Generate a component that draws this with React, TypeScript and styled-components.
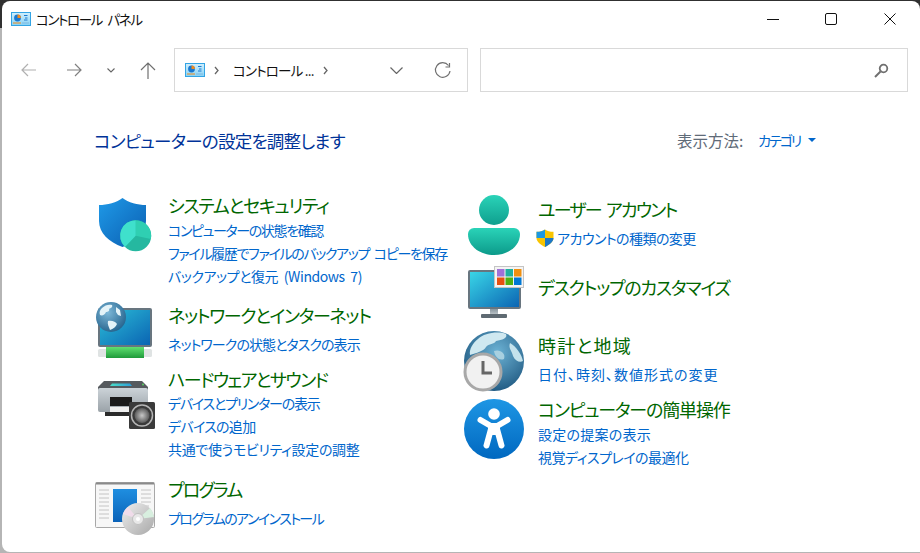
import React from "react";
import styled, { createGlobalStyle } from "styled-components";

const Global = createGlobalStyle`
  html, body { margin: 0; padding: 0; background: #b5b5b5; }
  body { font-family: "Noto Sans CJK JP", "Noto Sans", sans-serif; font-feature-settings: "palt"; }
  * { box-sizing: border-box; }
`;

const Desktop = styled.div`
  width: 920px;
  height: 553px;
  padding: 1px 0 1px 2px;
  background: linear-gradient(#303030 0 28px, #b5b5b5 28px);
  overflow: hidden;
`;
const Window = styled.div`
  width: 918px;
  height: 551px;
  background: #fff;
  border-radius: 8px 8px 0 8px;
  overflow: hidden;
  display: flex;
  flex-direction: column;
`;
const TitleBar = styled.div`
  height: 36px;
  display: flex;
  align-items: center;
  padding: 0 1px 0 9px;
  flex: none;
`;
const TitleText = styled.span`
  margin-left: 5px;
  font-size: 13.5px;
  letter-spacing: -1.4px;
  word-spacing: 4px;
  color: #111;
  flex: 1;
`;
const WinButton = styled.button`
  width: 58.5px;
  height: 36px;
  padding: 0;
  border: 0;
  background: none;
  display: flex;
  align-items: center;
  justify-content: center;
`;
const ToolBar = styled.div`
  height: 44px;
  margin-top: 11px;
  display: flex;
  align-items: center;
  flex: none;
`;
const NavButton = styled.button<{ $w: number }>`
  width: ${(p) => p.$w}px;
  height: 44px;
  padding: 0;
  border: 0;
  background: none;
  display: flex;
  align-items: center;
  justify-content: center;
`;
const AddressBox = styled.div`
  width: 294px;
  height: 44px;
  margin-left: 7px;
  border: 1px solid #d9d9d9;
  display: flex;
  align-items: center;
  padding-left: 10px;
`;
const Spacer = styled.span<{ $w: number }>`
  flex: none;
  width: ${(p) => p.$w}px;
`;
const Crumb = styled.span`
  margin-left: 14px;
  width: 90px;
  font-size: 13.5px;
  letter-spacing: -0.8px;
  color: #111;
  white-space: nowrap;
`;
const SearchBox = styled.div`
  width: 428px;
  height: 44px;
  margin-left: 12px;
  border: 1px solid #d9d9d9;
  display: flex;
  align-items: center;
  justify-content: flex-end;
  padding-right: 18px;
`;
const Content = styled.main`
  flex: 1;
  padding: 0 0 0 92px;
`;
const HeadRow = styled.div`
  height: 28px;
  margin-top: 34px;
  display: flex;
  align-items: center;
`;
const Heading = styled.h1`
  margin: 0;
  flex: none;
  width: 583px;
  font-size: 17.5px;
  font-weight: 400;
  letter-spacing: -0.75px;
  color: #003399;
`;
const ViewLabel = styled.span`
  font-size: 15.5px;
  color: #5f6b78;
  width: 81px;
`;
const ViewValue = styled.span`
  font-size: 14px;
  letter-spacing: -2px;
  color: #0066cc;
  display: flex;
  align-items: center;
  gap: 8px;
`;
const Caret = styled.i`
  width: 0;
  height: 0;
  border-left: 4px solid transparent;
  border-right: 4px solid transparent;
  border-top: 4px solid #0066cc;
`;
const Columns = styled.div`
  margin-top: 39px;
  display: grid;
  grid-template-columns: 370px 1fr;
`;
const Column = styled.div<{ $top: number }>`
  padding-top: ${(p) => p.$top}px;
`;
const Category = styled.section<{ $h: number }>`
  height: ${(p) => p.$h}px;
  display: flex;
`;
const IconSlot = styled.div<{ $top: number }>`
  width: 74px;
  height: 0;
  flex: none;
  svg { display: block; overflow: visible; margin-top: ${(p) => p.$top}px; }
`;
const CatTitle = styled.h2<{ $ls: number; $gap: number }>`
  margin: 0 0 ${(p) => p.$gap}px;
  height: 24px;
  line-height: 24px;
  font-size: 18px;
  font-weight: 400;
  letter-spacing: ${(p) => p.$ls}px;
  word-spacing: 3px;
  color: #006600;
  white-space: nowrap;
`;
const CatLink = styled.a<{ $ls: number }>`
  display: flex;
  align-items: center;
  height: 23px;
  font-size: 14px;
  letter-spacing: ${(p) => p.$ls}px;
  word-spacing: 3px;
  color: #0066cc;
  white-space: pre;
`;
const Glyph = styled.svg`
  flex: none;
  display: block;
`;
const UacGlyph = styled.svg`
  flex: none;
  margin: 0 3px 0 -2px;
`;

const PanelIcon: React.FC = () => (
  <Glyph width="20" height="14" viewBox="0 0 20 14">
    <defs>
      <linearGradient id="pg" x1="0" y1="0" x2="0" y2="1">
        <stop offset="0" stopColor="#d2effc" />
        <stop offset="1" stopColor="#86d2f5" />
      </linearGradient>
    </defs>
    <rect x="0.5" y="0.5" width="19" height="13" fill="url(#pg)" stroke="#33a4e4" />
    <circle cx="6.500" cy="6" r="3.400" fill="#1a78d0" />
    <path d="M6.500 6V2.600A3.400 3.400 0 0 1 9.900 6Z" fill="#f08a1d" />
    <path d="M13 3.500h3.500M14 6h2.500M13 8h3.500" stroke="#1a78d0" strokeWidth="1" />
    <path d="M2 11h8" stroke="#f08a1d" strokeWidth="1.200" />
    <path d="M11 11h7" stroke="#7fb8e0" strokeWidth="1" />
  </Glyph>
);
const Chevron: React.FC = () => (
  <Glyph width="5" height="9" viewBox="0 0 5 9">
    <path d="M1 1l3 3.500L1 8" fill="none" stroke="#666" strokeWidth="1.300" />
  </Glyph>
);

const ShieldIcon = () => (
  <svg width="62" height="62" viewBox="0 0 62 62">
    <defs>
      <linearGradient id="sh" x1="0" y1="0" x2="1" y2="1">
        <stop offset="0" stopColor="#1f9ae8" />
        <stop offset="1" stopColor="#0a5db0" />
      </linearGradient>
    </defs>
    <path d="M28.500 5C34 9.500 44 12 52 12V28C52 40 42 49 28.500 54C15 49 5 40 5 28V12C13 12 23 9.500 28.500 5Z" fill="url(#sh)" />
    <circle cx="41.700" cy="42.700" r="15.500" fill="#25b8a0" />
    <path d="M41.700 42.700V27.200A15.500 15.500 0 0 1 56.800 46Z" fill="#2fcfb2" />
    <path d="M41.700 42.700V27.200A15.500 15.500 0 0 0 31 54Z" fill="#3fe0cc" />
  </svg>
);
const NetworkIcon = () => (
  <svg width="62" height="62" viewBox="0 0 62 62">
    <defs>
      <linearGradient id="nm" x1="0" y1="0" x2="1" y2="1">
        <stop offset="0" stopColor="#2cc0d8" />
        <stop offset="1" stopColor="#0a62b2" />
      </linearGradient>
      <linearGradient id="ng" x1="0" y1="0" x2="0" y2="1">
        <stop offset="0" stopColor="#5fe070" />
        <stop offset="1" stopColor="#1f9a3a" />
      </linearGradient>
      <radialGradient id="nb" cx="0.4" cy="0.35" r="0.7">
        <stop offset="0" stopColor="#7db8d8" />
        <stop offset="1" stopColor="#24628c" />
      </radialGradient>
    </defs>
    <rect x="5" y="6" width="52" height="37" rx="1" fill="url(#nm)" stroke="#68757f" strokeWidth="2" />
    <rect x="4" y="46" width="54" height="8" rx="1.500" fill="#dfe3e3" />
    <rect x="12" y="44" width="38" height="11" fill="url(#ng)" />
    <circle cx="17" cy="14" r="15" fill="url(#nb)" />
    <path d="M8 5c3-3 7-4 10-3 1 2-1 3-3 4 1 2-1 3-3 3-1 3-4 4-6 3-1-3 0-5 2-7zM14 18c4-1 8 1 9 3-1 3-4 5-7 6-1-3-3-6-2-9zM22 4l4 3 1 6-3-1-2-3z" fill="#e4f3f8" />
  </svg>
);
const PrinterIcon = () => (
  <svg width="62" height="62" viewBox="0 0 62 62">
    <defs>
      <linearGradient id="pb" x1="0" y1="0" x2="0" y2="1">
        <stop offset="0" stopColor="#ccd3d8" />
        <stop offset="1" stopColor="#9aa2a8" />
      </linearGradient>
      <linearGradient id="pt" x1="0" y1="0" x2="1" y2="0">
        <stop offset="0" stopColor="#4adfc8" />
        <stop offset="1" stopColor="#2c9cd8" />
      </linearGradient>
      <radialGradient id="ps" cx="0.5" cy="0.5" r="0.5">
        <stop offset="0" stopColor="#c8c8c8" />
        <stop offset="1" stopColor="#5a5a5a" />
      </radialGradient>
    </defs>
    <path d="M10 14H48L54 20V24H4V20Z" fill="#565a5e" />
    <path d="M18 16.500H36L38 19H16Z" fill="url(#pt)" />
    <rect x="4" y="21" width="50" height="24" rx="2" fill="url(#pb)" />
    <rect x="16" y="30" width="22" height="9" fill="#1b1b1b" />
    <rect x="16" y="40" width="22" height="5" fill="#efefef" />
    <rect x="11" y="45" width="25" height="4" fill="#2b2b2b" />
    <circle cx="49" cy="17.500" r="1" fill="#55d060" />
    <rect x="35" y="35" width="26" height="27" rx="1.500" fill="#3a3a3a" />
    <circle cx="48" cy="48.500" r="10.500" fill="#3a3a3a" stroke="#b5b5b5" strokeWidth="1.500" />
    <circle cx="48" cy="48.500" r="7.500" fill="url(#ps)" />
  </svg>
);
const ProgramIcon = () => (
  <svg width="62" height="62" viewBox="0 0 62 62">
    <defs>
      <linearGradient id="pr" x1="0" y1="0" x2="0" y2="1">
        <stop offset="0" stopColor="#1f8ee0" />
        <stop offset="1" stopColor="#0a62b8" />
      </linearGradient>
      <linearGradient id="pd" x1="0" y1="0" x2="1" y2="1">
        <stop offset="0" stopColor="#efefef" />
        <stop offset="1" stopColor="#a8a8a8" />
      </linearGradient>
    </defs>
    <rect x="1.500" y="5.500" width="59" height="45" rx="1" fill="#f7f7f7" stroke="#a8a8a8" />
    <path d="M2 6.500H60" stroke="#8a8a8a" strokeWidth="2" />
    <rect x="19" y="12" width="24" height="33" fill="url(#pr)" />
    <path d="M5 13h10M5 17h10M5 21h10M5 25h10M5 29h10M5 33h10M5 37h10M5 41h10M47 13h10M47 17h10M47 21h10M47 25h10M47 29h8" stroke="#c4c4c4" strokeWidth="1" />
    <circle cx="44" cy="42" r="16" fill="url(#pd)" />
    <path d="M44 42L56 31A16 16 0 0 1 60 40Z" fill="#d8efdf" />
    <path d="M44 42L29 37A16 16 0 0 1 34 30Z" fill="#f0dcea" />
    <circle cx="44" cy="42" r="5.500" fill="#e8e8e8" stroke="#c0c0c0" />
    <circle cx="44" cy="42" r="2" fill="#fff" />
  </svg>
);
const PersonIcon = () => (
  <svg width="62" height="62" viewBox="0 0 62 62">
    <defs>
      <linearGradient id="ph" x1="0" y1="0" x2="0" y2="1">
        <stop offset="0" stopColor="#2ad3b8" />
        <stop offset="1" stopColor="#0f9f8e" />
      </linearGradient>
      <linearGradient id="pc" x1="0" y1="0" x2="0" y2="1">
        <stop offset="0" stopColor="#2ad3b8" />
        <stop offset="1" stopColor="#0c9a8a" />
      </linearGradient>
    </defs>
    <circle cx="30" cy="15" r="15" fill="url(#ph)" />
    <path d="M10 33H50A6 6 0 0 1 56 39C56 52 43 60 30 60C17 60 4 52 4 39A6 6 0 0 1 10 33Z" fill="url(#pc)" />
  </svg>
);
const TILES = [
  ["#a070d8", "#20b0a0", "#f09010"],
  ["#e85010", "#50b010", "#0078d4"],
];
const DesktopIcon = () => (
  <svg width="62" height="62" viewBox="0 0 62 62">
    <defs>
      <linearGradient id="dm" x1="0" y1="0" x2="1" y2="1">
        <stop offset="0" stopColor="#3ad8e8" />
        <stop offset="1" stopColor="#0a62b2" />
      </linearGradient>
      <linearGradient id="ds" x1="0" y1="0" x2="0" y2="1">
        <stop offset="0" stopColor="#8a979f" />
        <stop offset="1" stopColor="#c0c8cc" />
      </linearGradient>
    </defs>
    <rect x="5" y="5" width="51" height="37" rx="1" fill="url(#dm)" stroke="#68757f" strokeWidth="2" />
    <rect x="26" y="43" width="8" height="6" fill="url(#ds)" />
    <rect x="17" y="48" width="26" height="4" rx="1" fill="#5f6a72" />
    <rect x="30.500" y="0.500" width="29" height="21" fill="#f4f4f4" stroke="#c4c4c4" />
    {TILES.map((row, r) =>
      row.map((c, i) => <rect key={c} x={33 + i * 8.5} y={3 + r * 8.5} width="7.500" height="7.500" fill={c} />)
    )}
  </svg>
);
const ClockIcon = () => (
  <svg width="62" height="62" viewBox="0 0 62 62">
    <defs>
      <radialGradient id="cg" cx="0.55" cy="0.35" r="0.75">
        <stop offset="0" stopColor="#6cb2d4" />
        <stop offset="1" stopColor="#174f78" />
      </radialGradient>
    </defs>
    <circle cx="30" cy="30" r="30" fill="url(#cg)" />
    <path d="M14 8C20 2 34 0 42 3C44 7 38 9 32 10C30 14 25 12 22 16C20 20 12 22 6 24C5 18 9 12 14 8Z" fill="#cfe8f0" />
    <path d="M46 12C52 15 58 24 59 30C56 32 51 30 49 25C48 20 44 17 46 12Z" fill="#c4e2ec" />
    <path d="M30 20C36 18 42 22 40 28C35 30 31 26 30 20Z" fill="#a8d0e0" />
    <circle cx="19" cy="41" r="18" fill="#f1f1f1" stroke="#a8a8a8" strokeWidth="3" />
    <path d="M19 30V42H28" fill="none" stroke="#666" strokeWidth="3" />
  </svg>
);
const AccessIcon = () => (
  <svg width="62" height="62" viewBox="0 0 62 62">
    <defs>
      <linearGradient id="ag" x1="0" y1="0" x2="0" y2="1">
        <stop offset="0" stopColor="#1e96e4" />
        <stop offset="1" stopColor="#0068c0" />
      </linearGradient>
    </defs>
    <circle cx="30" cy="30" r="30" fill="url(#ag)" />
    <circle cx="30" cy="15" r="5.800" fill="#fff" />
    <path d="M16.500 21L26 26.500M43.500 21L34 26.500M27 30L22.500 46.500M33 30L37.500 46.500" fill="none" stroke="#fff" strokeWidth="6" strokeLinecap="round" />
    <rect x="24" y="24" width="12" height="12" rx="2" fill="#fff" />
  </svg>
);
const UacIcon = () => (
  <UacGlyph width="18" height="18" viewBox="0 0 18 18">
    <path d="M9 0.500C11 2 14 2.800 17.500 2.800V9C17.500 13 13 16 9 18C5 16 0.500 13 0.500 9V2.800C4 2.800 7 2 9 0.500Z" fill="#f8c400" />
    <path d="M9 0.500C7 2 4 2.800 0.500 2.800V9H9Z" fill="#1c98e0" />
    <path d="M9 9H17.500C17.500 13 13 16 9 18Z" fill="#1c78c8" />
  </UacGlyph>
);

type Link = [string, number];
type Cat = { title: string; ls: number; gap: number; links: Link[]; h: number; top: number; icon: React.ReactNode; uac?: boolean };

const LEFT: Cat[] = [
  { title: "システムとセキュリティ", ls: -1.27, gap: 1, h: 110, top: 0, icon: <ShieldIcon />, links: [["コンピューターの状態を確認", -1.38], ["ファイル履歴でファイルのバックアップ コピーを保存", -1.34], ["バックアップと復元 (Windows 7)", -0.44]] },
  { title: "ネットワークとインターネット", ls: -1.36, gap: 5, h: 64, top: 0, icon: <NetworkIcon />, links: [["ネットワークの状態とタスクの表示", -0.94]] },
  { title: "ハードウェアとサウンド", ls: -1.5, gap: 0, h: 110, top: 0, icon: <PrinterIcon />, links: [["デバイスとプリンターの表示", -1.23], ["デバイスの追加", -0.7], ["共通で使うモビリティ設定の調整", -0.33]] },
  { title: "プログラム", ls: -1.8, gap: 5, h: 60, top: 0, icon: <ProgramIcon />, links: [["プログラムのアンインストール", -1.57]] },
];
const RIGHT: Cat[] = [
  { title: "ユーザー アカウント", ls: -1.8, gap: 5, h: 78, top: -2, icon: <PersonIcon />, links: [["アカウントの種類の変更", -0.55]], uac: true },
  { title: "デスクトップのカスタマイズ", ls: -1.23, gap: 1, h: 58, top: -9, icon: <DesktopIcon />, links: [] },
  { title: "時計と地域", ls: 1.2, gap: 5, h: 64, top: -2, icon: <ClockIcon />, links: [["日付、時刻、数値形式の変更", 1]] },
  { title: "コンピューターの簡単操作", ls: -1.17, gap: 1, h: 70, top: 2, icon: <AccessIcon />, links: [["設定の提案の表示", 0.25], ["視覚ディスプレイの最適化", -0.5]] },
];

const renderCat = (c: Cat) => (
  <Category key={c.title} $h={c.h}>
    <IconSlot $top={c.top}>{c.icon}</IconSlot>
    <div>
      <CatTitle $ls={c.ls} $gap={c.gap}>{c.title}</CatTitle>
      {c.links.map(([text, ls]) => (
        <CatLink key={text} $ls={ls}>
          {c.uac && <UacIcon />}
          {text}
        </CatLink>
      ))}
    </div>
  </Category>
);

export default function App() {
  return (
    <Desktop>
      <Global />
      <Window>
        <TitleBar>
          <PanelIcon />
          <TitleText>コントロール パネル</TitleText>
          <WinButton aria-label="minimize">
            <svg width="12" height="12" viewBox="0 0 12 12"><path d="M0 6.500H12" stroke="#111" strokeWidth="1" /></svg>
          </WinButton>
          <WinButton aria-label="maximize">
            <svg width="12" height="12" viewBox="0 0 12 12"><rect x="0.500" y="0.500" width="11" height="11" rx="1.500" fill="none" stroke="#111" /></svg>
          </WinButton>
          <WinButton aria-label="close">
            <svg width="12" height="12" viewBox="0 0 12 12"><path d="M0.500 0.500L11.500 11.500M11.500 0.500L0.500 11.500" stroke="#111" strokeWidth="1" /></svg>
          </WinButton>
        </TitleBar>
        <ToolBar>
          <NavButton $w={52}>
            <svg width="15" height="14" viewBox="0 0 15 14"><path d="M15 7H1M7 1L1 7l6 6" fill="none" stroke="#b0b0b0" strokeWidth="1.200" /></svg>
          </NavButton>
          <NavButton $w={40}>
            <svg width="15" height="14" viewBox="0 0 15 14"><path d="M0 7H14M8 1l6 6-6 6" fill="none" stroke="#808080" strokeWidth="1.200" /></svg>
          </NavButton>
          <NavButton $w={34}>
            <svg width="8" height="5" viewBox="0 0 8 5"><path d="M0.500 0.500L4 4l3.500-3.500" fill="none" stroke="#666" strokeWidth="1.100" /></svg>
          </NavButton>
          <NavButton $w={39}>
            <svg width="16" height="17" viewBox="0 0 16 17"><path d="M8 17V1M1 8l7-7 7 7" fill="none" stroke="#707070" strokeWidth="1.200" /></svg>
          </NavButton>
          <AddressBox>
            <PanelIcon />
            <Spacer $w={9} />
            <Chevron />
            <Crumb>コントロール ...</Crumb>
            <Chevron />
            <Spacer $w={62} />
            <svg width="13" height="7" viewBox="0 0 13 7"><path d="M0.500 0.500L6.500 6.500l6-6" fill="none" stroke="#666" strokeWidth="1.200" /></svg>
            <Spacer $w={31} />
            <svg width="17" height="17" viewBox="0 0 17 17"><path d="M14.500 3.500A7.300 7.300 0 1 0 16 9M15.500 1V5H11.500" fill="none" stroke="#707070" strokeWidth="1.200" /></svg>
          </AddressBox>
          <SearchBox>
            <svg width="15" height="15" viewBox="0 0 15 15"><circle cx="9.500" cy="5.500" r="3.800" fill="none" stroke="#707070" strokeWidth="1.800" /><path d="M6.500 8.500L1 14" stroke="#707070" strokeWidth="2" /></svg>
          </SearchBox>
        </ToolBar>
        <Content>
          <HeadRow>
            <Heading>コンピューターの設定を調整します</Heading>
            <ViewLabel>表示方法:</ViewLabel>
            <ViewValue>カテゴリ<Caret /></ViewValue>
          </HeadRow>
          <Columns>
            <Column $top={0}>{LEFT.map(renderCat)}</Column>
            <Column $top={4}>{RIGHT.map(renderCat)}</Column>
          </Columns>
        </Content>
      </Window>
    </Desktop>
  );
}
